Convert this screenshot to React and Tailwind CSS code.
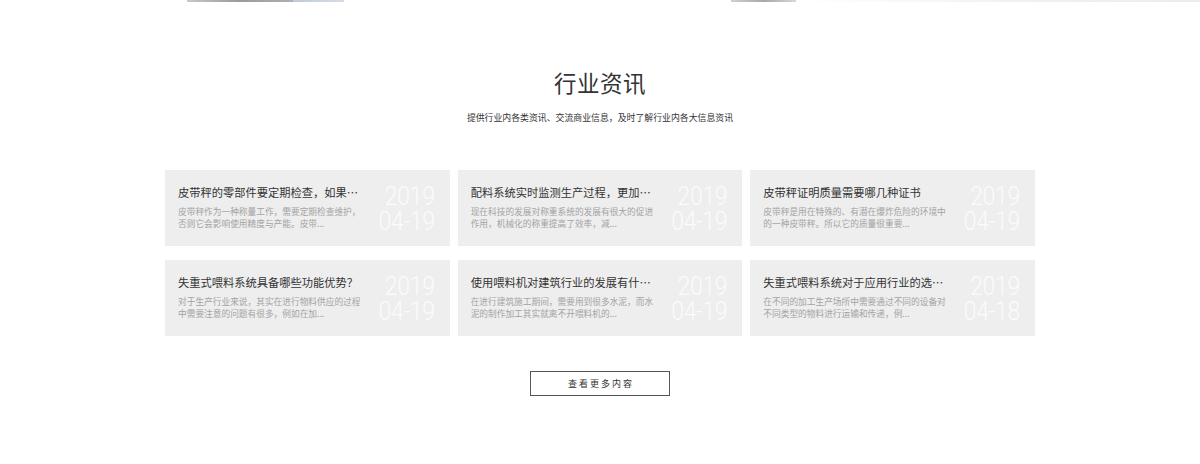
import React from "react";

const items = [
  { t: "皮带秤的零部件要定期检查，如果…", d: ["皮带秤作为一种称量工作，需要定期检查维护，", "否则它会影响使用精度与产能。皮带..."], y: "2019", md: "04-19" },
  { t: "配料系统实时监测生产过程，更加…", d: ["现在科技的发展对称重系统的发展有很大的促进", "作用，机械化的称重提高了效率，减..."], y: "2019", md: "04-19" },
  { t: "皮带秤证明质量需要哪几种证书", d: ["皮带秤是用在特殊的、有潜在爆炸危险的环境中", "的一种皮带秤。所以它的质量很重要..."], y: "2019", md: "04-19" },
  { t: "失重式喂料系统具备哪些功能优势？", d: ["对于生产行业来说，其实在进行物料供应的过程", "中需要注意的问题有很多，例如在加..."], y: "2019", md: "04-19" },
  { t: "使用喂料机对建筑行业的发展有什…", d: ["在进行建筑施工期间，需要用到很多水泥，而水", "泥的制作加工其实就离不开喂料机的..."], y: "2019", md: "04-19" },
  { t: "失重式喂料系统对于应用行业的选…", d: ["在不同的加工生产场所中需要通过不同的设备对", "不同类型的物料进行运输和传递，例..."], y: "2019", md: "04-18" },
];

const cjk = { fontFamily: '"Noto Sans CJK SC", "Noto Sans", sans-serif' };

export default function App() {
  return (
    <div className="w-[1200px] h-[464px] bg-white overflow-hidden" style={cjk}>
      <div className="flex h-[2px]">
        <div className="w-[187px]" />
        <div className="w-[106px] bg-gradient-to-r from-[#c8c8c8] via-[#9a9a9a] to-[#b0b0b0]" />
        <div className="w-[51px] bg-gradient-to-r from-[#c2cadb] to-[#d5dbe6]" />
        <div className="w-[387px]" />
        <div className="w-[65px] bg-gradient-to-r from-[#d0d0d0] via-[#a8a8a8] to-[#d8d8d8]" />
        <div className="flex-1 bg-gradient-to-r from-white via-[#f2f2f2] to-[#ececec]" />
      </div>
      <div className="flex flex-col items-center">
        <h2 className="mt-[65px] text-[22.5px] leading-[30px] text-[#333] font-normal tracking-[0.5px]">行业资讯</h2>
        <p className="mt-[15px] text-[8.9px] leading-[12px] text-[#333]">提供行业内各类资讯、交流商业信息，及时了解行业内各大信息资讯</p>
        <div className="mt-[46px] w-[870px] grid grid-cols-3 gap-x-[8px] gap-y-[14px]">
          {items.map((it, i) => (
            <div key={i} className="h-[76px] bg-[#eeeeee] flex justify-between pl-[13px] pr-[15px]">
              <div className="pt-[14px]">
                <div className="text-[11.25px] leading-[16px] text-[#333] whitespace-nowrap">{it.t}</div>
                <div className="mt-[6px] text-[8.7px] leading-[12px] text-[#a3a3a3] whitespace-nowrap">
                  <div>{it.d[0]}</div>
                  <div>{it.d[1]}</div>
                </div>
              </div>
              <div
                className="pt-[12px] text-right text-[23px] leading-[22px] text-[#fbfbfb] font-light scale-y-[1.15] origin-top tracking-[-0.3px]"
                style={{ fontFamily: "Roboto, sans-serif" }}
              >
                {it.y}
                <br />
                {it.md}
              </div>
            </div>
          ))}
        </div>
        <button className="mt-[35px] w-[140px] h-[25px] border border-[#555] flex items-center justify-center text-[9px] tracking-[2px] text-[#333] pl-[2px]">
          查看更多内容
        </button>
      </div>
    </div>
  );
}
